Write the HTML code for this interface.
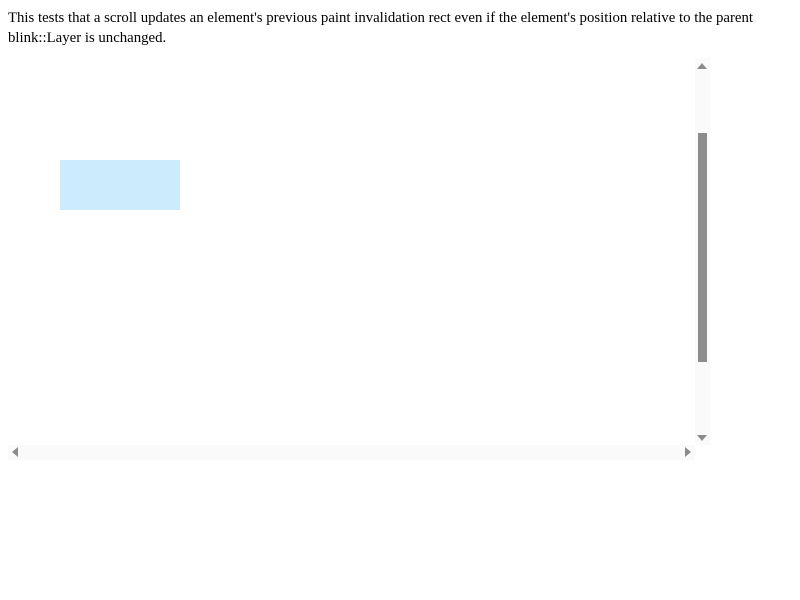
<!DOCTYPE html>
<html><head><style>
body{margin:0;background:#fff;font-family:"Liberation Serif",serif;font-size:14.8px;}
.t{position:absolute;left:8px;top:8px;width:780px;line-height:20px;color:#000;}
.box{position:absolute;left:8px;top:58px;width:702px;height:402px;}
.blue{position:absolute;left:52px;top:102px;width:120px;height:50px;background:#ccecfd;}
.vs{position:absolute;left:687px;top:0;width:15px;height:387px;background:#fafafa;}
.hs{position:absolute;left:0;top:387px;width:687px;height:15px;background:#fafafa;}
.thumb{position:absolute;left:3px;top:75px;width:9px;height:229px;background:#8c8c8c;}
.tri{position:absolute;width:0;height:0;}
</style></head><body>
<div class="t">This tests that a scroll updates an element's previous paint invalidation rect even if the element's position relative to the parent blink::Layer is unchanged.</div>
<div class="box">
<div class="blue"></div>
<div class="vs">
<div class="tri" style="left:2px;top:5px;border-left:5px solid transparent;border-right:5px solid transparent;border-bottom:6px solid #8c8c8c;"></div>
<div class="thumb"></div>
<div class="tri" style="left:2px;top:377px;border-left:5px solid transparent;border-right:5px solid transparent;border-top:6px solid #8c8c8c;"></div>
</div>
<div class="hs">
<div class="tri" style="left:4px;top:2px;border-top:5px solid transparent;border-bottom:5px solid transparent;border-right:6px solid #8c8c8c;"></div>
<div class="tri" style="left:677px;top:2px;border-top:5px solid transparent;border-bottom:5px solid transparent;border-left:6px solid #8c8c8c;"></div>
</div>
</div>
</body></html>
